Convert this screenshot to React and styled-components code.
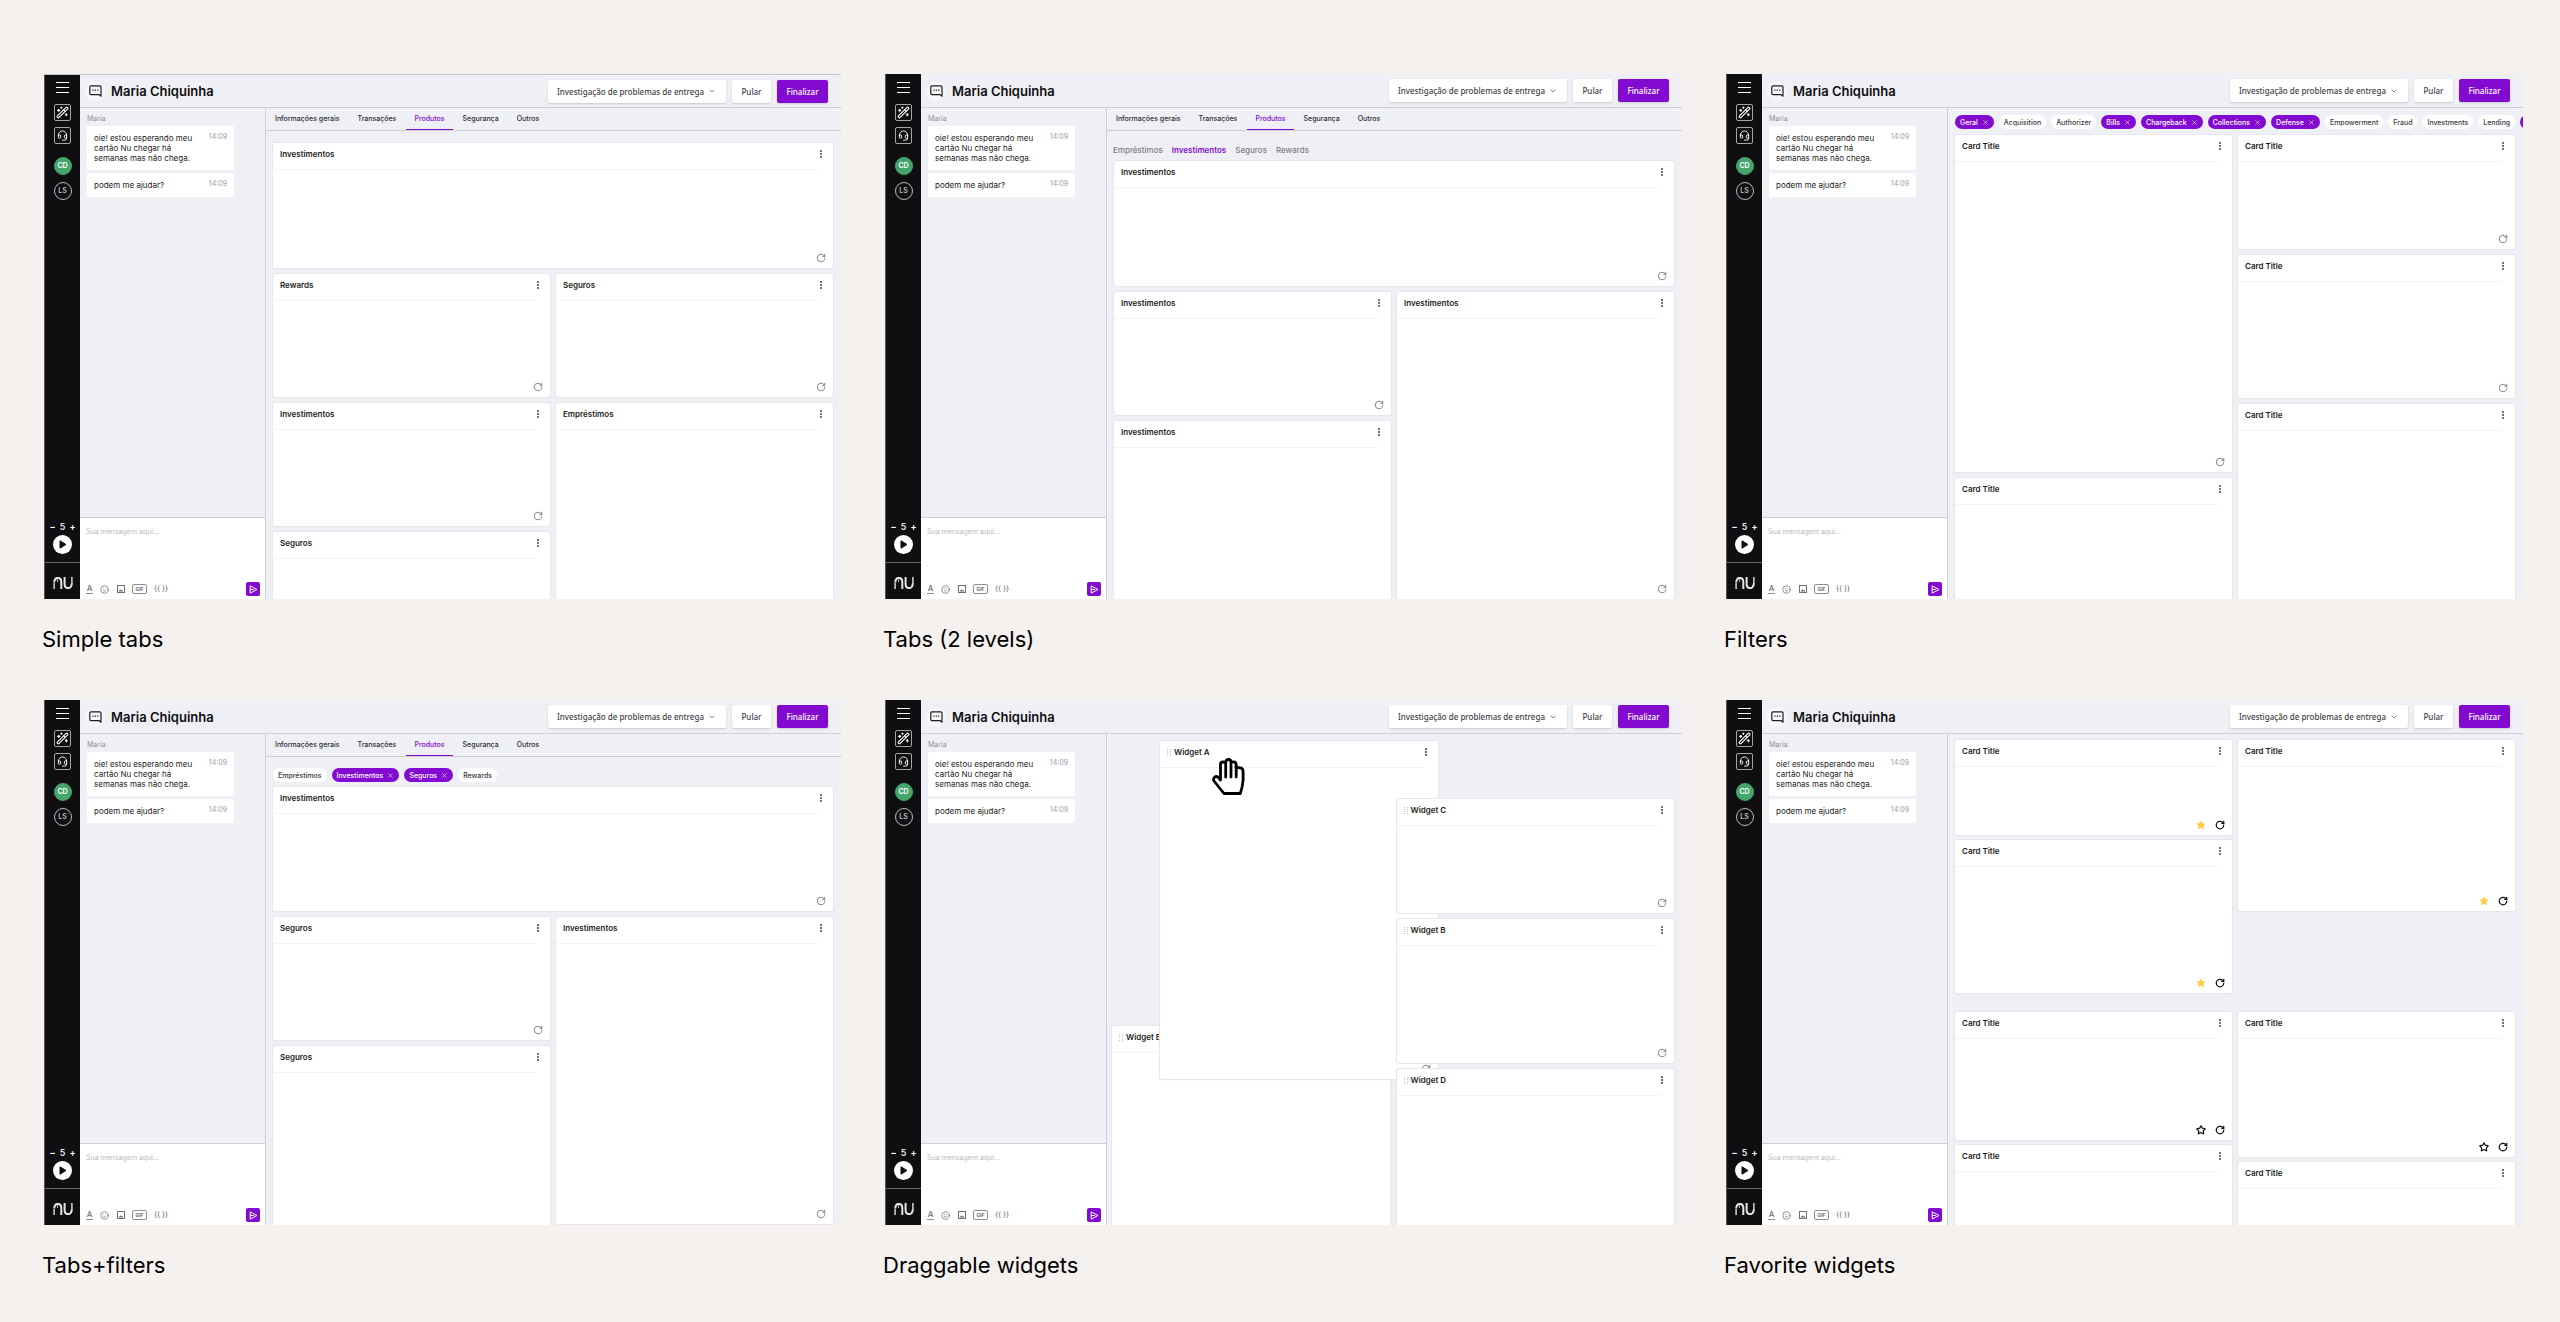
import React from "react"
import styled, { createGlobalStyle, css } from "styled-components"
import { ChevronDown, Headset, RotateCw, Smile, Star, WandSparkles, X } from "lucide-react"

const purple = "#820ad1"
const line = "#cdced6"

const GlobalStyle = createGlobalStyle`
  * {
    box-sizing: border-box;
  }
  body {
    margin: 0;
    background-color: #f5f1ee;
    font-family: Inter, "Liberation Sans", sans-serif;
  }
  button, select, textarea {
    margin: 0;
    padding: 0;
    border: 0;
    background: none;
    font: inherit;
    color: inherit;
  }
`

const Gallery = styled.main`
  display: grid;
  grid-template-columns: repeat(3, minmax(0, 1fr));
  gap: 41px 44px;
  padding: 74px 37px 30px 44px;
`

const Figure = styled.figure`
  margin: 0;
`

const Caption = styled.figcaption`
  margin: 20px 0 0 -2px;
  font-size: 22px;
  line-height: 40px;
  color: #000;
`

const Screen = styled.div`
  display: flex;
  aspect-ratio: 797 / 525;
  overflow: hidden;
  background-color: #eff0f5;
  border-top: ${props => (props.$outlined ? "1px solid #c6c7cb" : "0")};
`

const Sidebar = styled.nav`
  display: flex;
  flex-direction: column;
  align-items: center;
  flex: 0 0 36px;
  padding-top: ${props => (props.$outlined ? "7px" : "8px")};
  border-left: 1px solid #55555a;
  background-color: #0f0f11;
  color: #fff;
`

const MenuButton = styled.button`
  display: flex;
  margin-bottom: 11px;
`

const SquareButton = styled.button`
  display: flex;
  align-items: center;
  justify-content: center;
  width: 17px;
  height: 17px;
  margin-bottom: 6px;
  border: 1px solid #a5a5aa;
  border-radius: 2px;
`

const Avatar = styled.button`
  width: 18px;
  height: 18px;
  margin-top: 7px;
  border: 1px solid ${props => (props.$active ? "#45a56c" : "#b9b9be")};
  border-radius: 50%;
  background-color: ${props => (props.$active ? "#45a56c" : "transparent")};
  color: ${props => (props.$active ? "#fff" : "#b9b9be")};
  font-size: 7px;
  font-weight: 600;
  line-height: 16px;
`

const Counter = styled.div`
  display: flex;
  align-items: center;
  justify-content: space-between;
  width: 26px;
  margin-top: auto;
  font-size: 9px;
  font-weight: 500;
  line-height: 12px;

  button {
    font-weight: 700;
  }
`

const PlayButton = styled.button`
  display: flex;
  margin: 2px 0 8px;
`

const Logo = styled.div`
  display: flex;
  align-items: center;
  justify-content: center;
  width: 100%;
  height: 37px;
  padding-bottom: 6px;
  padding-top: 10px;
  border-top: 1px solid #66666b;
`

const Workspace = styled.div`
  display: flex;
  flex-direction: column;
  flex: 1;
  min-width: 0;
`

const Header = styled.header`
  display: flex;
  align-items: center;
  gap: 6px;
  flex: 0 0 ${props => (props.$outlined ? "33px" : "34px")};
  padding: 0 13px 0 5px;
  border-bottom: 1px solid ${line};
`

const ChatBadge = styled.span`
  display: flex;
  align-items: center;
  justify-content: center;
  width: 20px;
  height: 20px;
  border-radius: 50%;
  background-color: #f7f7f9;
`

const CustomerName = styled.h1`
  margin: 0 auto 0 0;
  font-size: 13px;
  font-weight: 600;
  line-height: 20px;
  color: #0f0f11;
`

const controlStyle = css`
  height: 23px;
  border-radius: 2px;
  background-color: #fff;
  box-shadow: 0 1px 2px rgba(30, 30, 60, 0.18);
  color: #3f3f47;
  font-family: "Noto Sans", "Open Sans", sans-serif;
  font-size: 8px;
  font-weight: 500;
`

const Picker = styled.label`
  display: flex;
  align-items: center;
  width: 178px;
  padding-right: 10px;
  ${controlStyle}

  select {
    flex: 1;
    min-width: 0;
    height: 23px;
    padding-left: 9px;
    appearance: none;
    outline: none;
  }
`

const HeaderButton = styled.button`
  width: ${props => (props.$primary ? "51px" : "39px")};
  ${controlStyle}
  ${props =>
    props.$primary &&
    css`
      background-color: ${purple};
      color: #fff;
    `}
`

const Panes = styled.div`
  display: flex;
  flex: 1;
  min-height: 0;
`

const Conversation = styled.section`
  display: flex;
  flex-direction: column;
  flex: 0 0 186px;
  border-right: 1px solid ${line};
`

const Messages = styled.div`
  display: flex;
  flex-direction: column;
  align-items: flex-start;
  gap: 3px;
  flex: 1;
  padding: 6px 7px;
`

const Sender = styled.span`
  font-size: 7px;
  line-height: 9px;
  color: #8f8f9b;
`

const Bubble = styled.div`
  display: flex;
  justify-content: space-between;
  width: 147px;
  padding: 7px;
  border-radius: 2px;
  background-color: #fff;
`

const BubbleText = styled.p`
  width: 104px;
  margin: 0;
  font-size: 8px;
  line-height: 10px;
  color: #1d1d22;
`

const Time = styled.time`
  font-size: 7px;
  line-height: 8px;
  color: #9a9aa6;
`

const Composer = styled.form`
  display: flex;
  flex-direction: column;
  justify-content: space-between;
  height: 82px;
  padding: 9px 5px 3px 6px;
  border-top: 1px solid ${line};
  background-color: #fff;

  textarea {
    height: 30px;
    resize: none;
    outline: none;
    font-size: 7px;
    line-height: 10px;
  }

  textarea::placeholder {
    color: #b9b9c4;
    opacity: 1;
  }
`

const Tools = styled.div`
  display: flex;
  align-items: center;
  gap: 7px;
  color: #6f6f7b;
`

const ToolButton = styled.button`
  display: flex;
  align-items: center;
  justify-content: center;
  width: 9px;
  height: 10px;
`

const TextButton = styled.button`
  width: 7px;
  border-bottom: 1px solid #8d8d98;
  font-size: 8px;
  font-weight: 500;
  line-height: 9px;
`

const GifButton = styled.button`
  width: 15px;
  height: 10px;
  border: 1px solid #8d8d98;
  border-radius: 2px;
  font-size: 5px;
  font-weight: 700;
  line-height: 8px;
`

const BracesButton = styled.button`
  font-size: 7px;
  font-weight: 500;
  line-height: 10px;
`

const SendButton = styled.button`
  display: flex;
  align-items: center;
  justify-content: center;
  width: 14px;
  height: 14px;
  margin-left: auto;
  border-radius: 2px;
  background-color: ${purple};
  color: #fff;
`

const Content = styled.section`
  display: flex;
  flex-direction: column;
  flex: 1;
  min-width: 0;
  overflow: hidden;
`

const TabBar = styled.div`
  display: flex;
  gap: 2px;
  flex: 0 0 22px;
  padding-left: 1px;
  border-bottom: 1px solid ${line};
`

const Tab = styled.button`
  height: 22px;
  padding: 0 8px;
  border-bottom: 1px solid ${props => (props.$active ? purple : "transparent")};
  color: ${props => (props.$active ? purple : "#2c2c33")};
  font-size: 7px;
  font-weight: 500;
  white-space: nowrap;
`

const SubTabBar = styled.div`
  display: flex;
  gap: 9px;
  margin-top: 13px;
  padding-left: 6px;
`

const SubTab = styled.button`
  color: ${props => (props.$active ? purple : "#7d7d88")};
  font-size: 8px;
  font-weight: ${props => (props.$active ? 600 : 500)};
  line-height: 12px;
`

const ChipBar = styled.div`
  display: flex;
  gap: 5px;
  margin-top: ${props => (props.$spaced ? "11px" : "7px")};
  padding-left: 7px;
`

const Chip = styled.button`
  display: flex;
  align-items: center;
  gap: 4px;
  flex: none;
  height: 14px;
  padding: 0 5px;
  border-radius: 7px;
  background-color: ${props => (props.$active ? purple : "#fff")};
  color: ${props => (props.$active ? "#fff" : "#3a3a42")};
  font-size: 7px;
  font-weight: 500;
`

const Board = styled.div`
  display: flex;
  flex-direction: column;
  gap: 6px;
  margin-top: ${props => props.$top}px;
  padding: 0 8px 0 7px;
`

const Columns = styled.div`
  display: grid;
  grid-template-columns: repeat(2, minmax(0, 1fr));
  align-items: start;
  gap: 6px;
  margin-bottom: ${props => props.$after || 0}px;
`

const Column = styled.div`
  display: flex;
  flex-direction: column;
  gap: ${props => props.$gap || 6}px;
`

const CardBox = styled.article`
  display: flex;
  flex-direction: column;
  justify-content: space-between;
  flex: none;
  min-height: ${props => props.$height}px;
  border-radius: 2px;
  background-color: #fff;
  box-shadow: 0 0 0 1px #e6e7ec, 0 1px 1px rgba(30, 30, 60, 0.1);
`

const CardHead = styled.div`
  display: flex;
  align-items: center;
  gap: 3px;
  height: 27px;
  padding: 0 7px 5px;
  background: linear-gradient(#f4f4f7, #f4f4f7) 0 100% / calc(100% - 14px) 1px no-repeat;
`

const CardTitle = styled.h2`
  margin: 0 auto 0 0;
  color: #1d1d22;
  font-size: 8px;
  font-weight: 600;
  line-height: 12px;
`

const IconButton = styled.button`
  display: flex;
  align-items: center;
  justify-content: center;
  width: 10px;
  height: 10px;

  svg {
    flex: none;
  }
`

const CardFoot = styled.div`
  display: flex;
  justify-content: flex-end;
  gap: 9px;
  padding: 5px 7px;
  color: ${props => (props.$strong ? "#111" : "#6d6d78")};
`

const Canvas = styled.div`
  position: relative;
  flex: 1;
`

const Floating = styled.div`
  position: absolute;
  top: ${props => props.$top}px;
  width: calc(50% - 10px);
  ${props => (props.$docked ? "right: 8px;" : `left: ${props.$left}px;`)}
`

const GrabCursor = styled.svg`
  position: absolute;
  top: 24px;
  left: 105px;
`

const MenuIcon = () => (
  <svg width="13" height="11" viewBox="0 0 13 11" stroke="#fff">
    <path d="M0 .5h13M0 5.5h13M0 10.5h13" />
  </svg>
)

const ChatIcon = () => (
  <svg width="13" height="12" viewBox="0 0 13 12" fill="none" stroke="#1d1d22" strokeWidth="1.2" strokeLinejoin="round">
    <path d="M2 .8h8.8q1.2 0 1.2 1.2v9.2l-1.8-1.500H2Q.8 9.700.8 8.500V2Q.8.800 2 .8z" />
    <path d="M3.400 5.200h1.200M5.800 5.200h1.200M8.200 5.200h1.200" />
  </svg>
)

const PlayIcon = () => (
  <svg width="19" height="19" viewBox="0 0 19 19">
    <circle cx="9.5" cy="9.5" r="9.5" fill="#fff" />
    <path d="M7 5.800v7.400l6-3.700z" fill="#0f0f11" stroke="#0f0f11" strokeLinejoin="round" />
  </svg>
)

const NuLogo = () => (
  <svg width="20" height="12" viewBox="0 0 20 12" fill="none" stroke="#e4e4e6">
    <path d="M1.100 12V6" strokeWidth="1.4" />
    <path d="M1.200 5.500Q1.600.9 4.600.9 8.300.9 8.300 5v7" strokeWidth="2" />
    <path d="M3.600 1.200Q4.600 2 4.600 5" strokeWidth=".8" />
    <path d="M11.600 0v7q0 4.100 3.700 4.100 3.100 0 3.500-4.600" strokeWidth="2" />
    <path d="M18.900 7V0" strokeWidth="1.4" />
  </svg>
)

const PictureIcon = () => (
  <svg width="8" height="8" viewBox="0 0 8 8" fill="none" stroke="currentColor">
    <rect x=".5" y=".5" width="7" height="7" />
    <path d="M1.500 6.500l1.800-2.300 1.200 1.300.8-.8 1.200 1.800z" fill="currentColor" stroke="none" />
  </svg>
)

const SendIcon = () => (
  <svg width="9" height="9" viewBox="0 0 9 9" fill="none" stroke="currentColor" strokeLinejoin="round">
    <path d="M1.200.9l6.800 3.600-6.800 3.600zM1.200 4.500h3.600" />
  </svg>
)

const DotsIcon = () => (
  <svg width="2" height="8" viewBox="0 0 2 8" fill="#73737d">
    <path d="M0 0h2v2H0zM0 3h2v2H0zM0 6h2v2H0z" />
  </svg>
)

const GripIcon = () => (
  <svg width="4" height="7" viewBox="0 0 4 7" fill="#c4c4cc">
    <path d="M0 0h1v1H0zM0 2h1v1H0zM0 4h1v1H0zM0 6h1v1H0zM3 0h1v1H3zM3 2h1v1H3zM3 4h1v1H3zM3 6h1v1H3z" />
  </svg>
)

const Hand = () => (
  <GrabCursor width="34" height="38" viewBox="0 0 34 38" fill="#fff" stroke="#000" strokeWidth="2.8" strokeLinecap="round" strokeLinejoin="round">
    <path d="M8.500 22V6.500Q8.500 4 11 4q1.200 0 2.700.6Q14 1.500 16.500 1.500T19 4q5-1 5.100 2.500V10q7-1.500 7 3.500v8.500q-.5 7-2.800 13.500H12L2 23q-1.200-2.500.8-4 2-1.300 3.700.7z" />
    <path d="M13.700 5v14M19 4.500V19M24.200 8v11" fill="none" />
  </GrabCursor>
)

const Card = ({ title, height, draggable, favorite }) => {
  const hasStar = favorite !== undefined

  return (
    <CardBox $height={height}>
      <CardHead>
        {draggable && <GripIcon />}
        <CardTitle>{title}</CardTitle>
        <IconButton aria-label="Opções">
          <DotsIcon />
        </IconButton>
      </CardHead>
      <CardFoot $strong={hasStar}>
        {hasStar && (
          <IconButton aria-label="Favoritar">
            <Star
              size={10}
              strokeWidth={favorite ? 1 : 3}
              color={favorite ? "#ffcb47" : "#111"}
              fill={favorite ? "#ffcb47" : "none"}
            />
          </IconButton>
        )}
        <IconButton aria-label="Atualizar">
          <RotateCw size={10} strokeWidth={hasStar ? 3 : 2} />
        </IconButton>
      </CardFoot>
    </CardBox>
  )
}

const tabs = ["Informações gerais", "Transações", "Produtos", "Segurança", "Outros"]

const Tabs = () => (
  <TabBar>
    {tabs.map(tab => (
      <Tab key={tab} $active={tab === "Produtos"}>
        {tab}
      </Tab>
    ))}
  </TabBar>
)

const Chips = ({ items, active, spaced }) => (
  <ChipBar $spaced={spaced}>
    {items.map(item => (
      <Chip key={item} $active={active.includes(item)}>
        {item}
        {active.includes(item) && <X size={7} />}
      </Chip>
    ))}
  </ChipBar>
)

const Agent = ({ caption, outlined, children }) => (
  <Figure>
    <Screen $outlined={outlined}>
      <Sidebar $outlined={outlined}>
        <MenuButton aria-label="Menu">
          <MenuIcon />
        </MenuButton>
        <SquareButton aria-label="Atalhos">
          <WandSparkles size={13} />
        </SquareButton>
        <SquareButton aria-label="Atendimento">
          <Headset size={11} />
        </SquareButton>
        <Avatar $active>CD</Avatar>
        <Avatar>LS</Avatar>
        <Counter>
          <button aria-label="Menos">−</button>
          <span>5</span>
          <button aria-label="Mais">+</button>
        </Counter>
        <PlayButton aria-label="Iniciar">
          <PlayIcon />
        </PlayButton>
        <Logo>
          <NuLogo />
        </Logo>
      </Sidebar>
      <Workspace>
        <Header $outlined={outlined}>
          <ChatBadge>
            <ChatIcon />
          </ChatBadge>
          <CustomerName>Maria Chiquinha</CustomerName>
          <Picker>
            <select aria-label="Motivo">
              <option>Investigação de problemas de entrega</option>
            </select>
            <ChevronDown size={8} />
          </Picker>
          <HeaderButton>Pular</HeaderButton>
          <HeaderButton $primary>Finalizar</HeaderButton>
        </Header>
        <Panes>
          <Conversation>
            <Messages>
              <Sender>Maria</Sender>
              <Bubble>
                <BubbleText>oie! estou esperando meu cartão Nu chegar há semanas mas não chega.</BubbleText>
                <Time>14:09</Time>
              </Bubble>
              <Bubble>
                <BubbleText>podem me ajudar?</BubbleText>
                <Time>14:09</Time>
              </Bubble>
            </Messages>
            <Composer>
              <textarea aria-label="Mensagem" placeholder="Sua mensagem aqui..." />
              <Tools>
                <TextButton type="button">A</TextButton>
                <ToolButton type="button" aria-label="Emoji">
                  <Smile size={9} />
                </ToolButton>
                <ToolButton type="button" aria-label="Imagem">
                  <PictureIcon />
                </ToolButton>
                <GifButton type="button">GIF</GifButton>
                <BracesButton type="button">{"{{ }}"}</BracesButton>
                <SendButton type="button" aria-label="Enviar">
                  <SendIcon />
                </SendButton>
              </Tools>
            </Composer>
          </Conversation>
          <Content>{children}</Content>
        </Panes>
      </Workspace>
    </Screen>
    <Caption>{caption}</Caption>
  </Figure>
)

const products = ["Empréstimos", "Investimentos", "Seguros", "Rewards"]

const squads = [
  "Geral",
  "Acquisition",
  "Authorizer",
  "Bills",
  "Chargeback",
  "Collections",
  "Defense",
  "Empowerment",
  "Fraud",
  "Investments",
  "Lending",
  "N",
]

const App = () => (
  <>
    <GlobalStyle />
    <Gallery>
      <Agent caption="Simple tabs" outlined>
        <Tabs />
        <Board $top={12}>
          <Card title="Investimentos" height={125} />
          <Columns>
            <Column>
              <Card title="Rewards" height={123} />
              <Card title="Investimentos" height={123} />
              <Card title="Seguros" height={123} />
            </Column>
            <Column>
              <Card title="Seguros" height={123} />
              <Card title="Empréstimos" height={240} />
            </Column>
          </Columns>
        </Board>
      </Agent>

      <Agent caption="Tabs (2 levels)">
        <Tabs />
        <SubTabBar>
          {products.map(product => (
            <SubTab key={product} $active={product === "Investimentos"}>
              {product}
            </SubTab>
          ))}
        </SubTabBar>
        <Board $top={5}>
          <Card title="Investimentos" height={125} />
          <Columns>
            <Column>
              <Card title="Investimentos" height={123} />
              <Card title="Investimentos" height={240} />
            </Column>
            <Card title="Investimentos" height={307} />
          </Columns>
        </Board>
      </Agent>

      <Agent caption="Filters">
        <Chips items={squads} active={["Geral", "Bills", "Chargeback", "Collections", "Defense", "N"]} />
        <Board $top={6}>
          <Columns>
            <Column>
              <Card title="Card Title" height={337} />
              <Card title="Card Title" height={240} />
            </Column>
            <Column>
              <Card title="Card Title" height={114} />
              <Card title="Card Title" height={143} />
              <Card title="Card Title" height={240} />
            </Column>
          </Columns>
        </Board>
      </Agent>

      <Agent caption="Tabs+filters">
        <Tabs />
        <Chips items={products} active={["Investimentos", "Seguros"]} spaced />
        <Board $top={5}>
          <Card title="Investimentos" height={124} />
          <Columns>
            <Column>
              <Card title="Seguros" height={123} />
              <Card title="Seguros" height={240} />
            </Column>
            <Card title="Investimentos" height={307} />
          </Columns>
        </Board>
      </Agent>

      <Agent caption="Draggable widgets">
        <Canvas>
          <Floating $left={5} $top={292}>
            <Card title="Widget E" height={240} draggable />
          </Floating>
          <Floating $left={53} $top={7}>
            <Card title="Widget A" height={338} draggable />
          </Floating>
          <Floating $docked $top={65}>
            <Card title="Widget C" height={114} draggable />
          </Floating>
          <Floating $docked $top={185}>
            <Card title="Widget B" height={144} draggable />
          </Floating>
          <Floating $docked $top={335}>
            <Card title="Widget D" height={240} draggable />
          </Floating>
          <Hand />
        </Canvas>
      </Agent>

      <Agent caption="Favorite widgets">
        <Board $top={6}>
          <Columns $after={13}>
            <Column $gap={5}>
              <Card title="Card Title" height={95} favorite />
              <Card title="Card Title" height={153} favorite />
            </Column>
            <Card title="Card Title" height={171} favorite />
          </Columns>
          <Columns>
            <Column $gap={5}>
              <Card title="Card Title" height={128} favorite={false} />
              <Card title="Card Title" height={240} favorite={false} />
            </Column>
            <Column $gap={5}>
              <Card title="Card Title" height={145} favorite={false} />
              <Card title="Card Title" height={240} favorite={false} />
            </Column>
          </Columns>
        </Board>
      </Agent>
    </Gallery>
  </>
)

export default App
